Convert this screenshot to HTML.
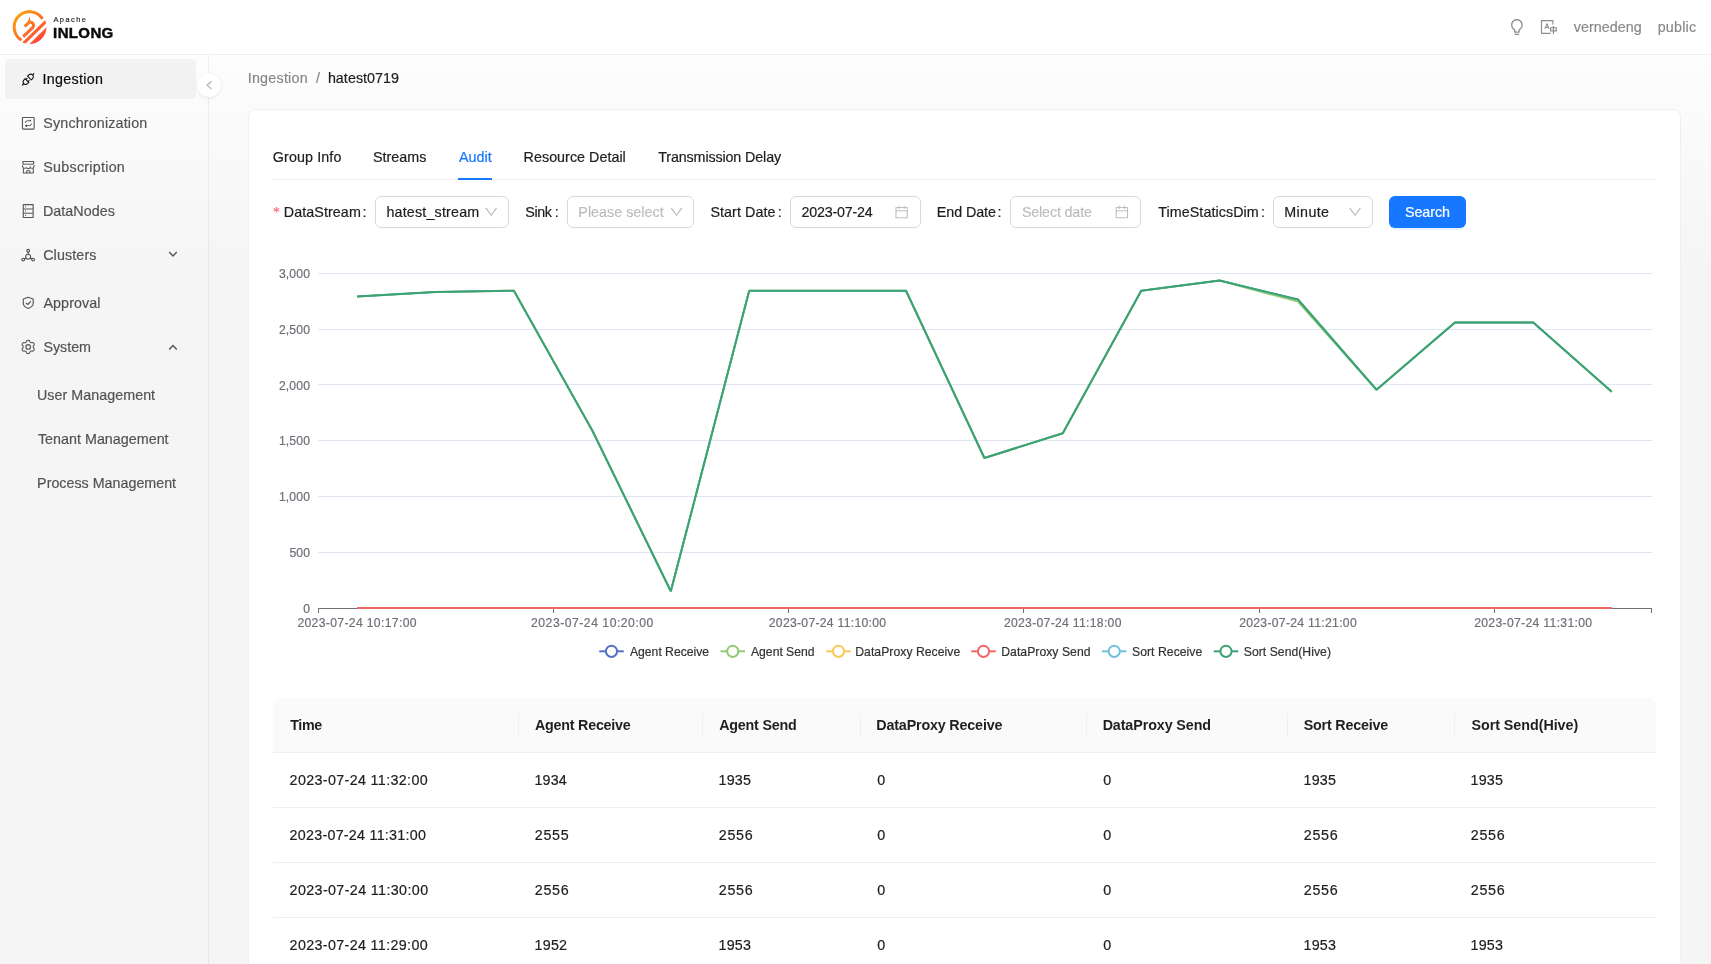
<!DOCTYPE html>
<html lang="en">
<head>
<meta charset="utf-8">
<title>Apache InLong - Ingestion - hatest0719 - Audit</title>
<style>
*{box-sizing:border-box}
html,body{margin:0;padding:0}
body{width:1711px;height:964px;overflow:hidden;position:relative;font-family:"Liberation Sans",sans-serif;
 background:linear-gradient(#ffffff,#f5f5f5 28%);-webkit-font-smoothing:antialiased}
.abs{position:absolute}
.t{position:absolute;white-space:nowrap;line-height:20px;height:20px;display:block;-webkit-text-stroke:0.2px currentColor}
#header{left:0;top:0;width:1711px;height:55px;background:#fff;border-bottom:1px solid #efefef}
#siderline{left:208px;top:55px;width:1px;height:909px;background:rgba(5,5,5,.06)}
#selitem{left:5px;top:59px;width:191px;height:40px;border-radius:4px;background:rgba(0,0,0,.04)}
#collapse{left:197px;top:73px;width:24px;height:24px;border-radius:50%;background:#fff;
 box-shadow:0 2px 8px -2px rgba(0,0,0,.05),0 1px 4px -1px rgba(25,15,15,.07),0 0 1px 0 rgba(0,0,0,.08)}
#card{left:248px;top:109px;width:1433px;height:900px;background:#fff;border:1px solid #f0f0f0;border-radius:8px}
#tabline{left:273px;top:179px;width:1383px;height:1px;background:#f0f0f0}
#inkbar{left:458px;top:178px;width:34px;height:2px;background:#1677ff}
.inp{position:absolute;top:196px;height:32px;border:1px solid #d9d9d9;border-radius:6px;background:#fff}
#btn{left:1389px;top:196px;width:77px;height:32px;border-radius:6px;background:#1677ff;box-shadow:0 2px 0 rgba(5,145,255,.1)}
#thead{left:273px;top:698px;width:1383px;height:55px;background:#fafafa;border-radius:8px 8px 0 0;border-bottom:1px solid #f0f0f0}
.rowline{position:absolute;left:273px;width:1383px;height:1px;background:#f0f0f0}
.colsep{position:absolute;top:714px;width:1px;height:22px;background:#f0f0f0}
svg.chart,svg.icons{position:absolute;left:0;top:0;pointer-events:none}
</style>
</head>
<body>
<div class="abs" id="header"></div>
<div class="abs" id="siderline"></div>
<div class="abs" id="selitem"></div>
<div class="abs" id="card"></div>
<div class="abs" id="collapse"></div>
<div class="abs" id="tabline"></div>
<div class="abs" id="inkbar"></div>
<div class="inp" style="left:375px;width:134px"></div>
<div class="inp" style="left:567px;width:127px"></div>
<div class="inp" style="left:790px;width:131px"></div>
<div class="inp" style="left:1010px;width:131px"></div>
<div class="inp" style="left:1273px;width:100px"></div>
<div class="abs" id="btn"></div>
<div class="abs" id="thead"></div>
<div class="colsep" style="left:518px"></div>
<div class="colsep" style="left:702px"></div>
<div class="colsep" style="left:860px"></div>
<div class="colsep" style="left:1086px"></div>
<div class="colsep" style="left:1287px"></div>
<div class="colsep" style="left:1454px"></div>
<div class="rowline" style="top:807px"></div>
<div class="rowline" style="top:862px"></div>
<div class="rowline" style="top:917px"></div>
<svg class="chart" width="1711" height="964" viewBox="0 0 1711 964">
<line x1="318" x2="1652" y1="273.5" y2="273.5" stroke="#E0E6F1" stroke-width="1"/>
<line x1="318" x2="1652" y1="329.5" y2="329.5" stroke="#E0E6F1" stroke-width="1"/>
<line x1="318" x2="1652" y1="384.5" y2="384.5" stroke="#E0E6F1" stroke-width="1"/>
<line x1="318" x2="1652" y1="440.5" y2="440.5" stroke="#E0E6F1" stroke-width="1"/>
<line x1="318" x2="1652" y1="496.5" y2="496.5" stroke="#E0E6F1" stroke-width="1"/>
<line x1="318" x2="1652" y1="552.5" y2="552.5" stroke="#E0E6F1" stroke-width="1"/>
<line x1="318" x2="1652" y1="608.5" y2="608.5" stroke="#6E7079" stroke-width="1"/>
<line x1="318.5" x2="318.5" y1="608" y2="613" stroke="#6E7079" stroke-width="1"/>
<line x1="553.5" x2="553.5" y1="608" y2="613" stroke="#6E7079" stroke-width="1"/>
<line x1="788.5" x2="788.5" y1="608" y2="613" stroke="#6E7079" stroke-width="1"/>
<line x1="1023.5" x2="1023.5" y1="608" y2="613" stroke="#6E7079" stroke-width="1"/>
<line x1="1259.5" x2="1259.5" y1="608" y2="613" stroke="#6E7079" stroke-width="1"/>
<line x1="1494.5" x2="1494.5" y1="608" y2="613" stroke="#6E7079" stroke-width="1"/>
<line x1="1651.5" x2="1651.5" y1="608" y2="613" stroke="#6E7079" stroke-width="1"/>
<polyline points="357.1,296.50 435.5,292.00 513.9,290.75 592.3,430.50 670.8,591.25 749.2,290.75 827.6,290.75 906.0,290.75 984.4,458.00 1062.8,433.25 1141.2,290.75 1219.6,280.50 1298.0,299.50 1376.5,389.75 1454.9,322.60 1533.3,322.60 1611.7,391.80" fill="none" stroke="#5470c6" stroke-width="1.5" stroke-linejoin="bevel"/>
<polyline points="357.1,296.50 435.5,292.00 513.9,290.75 592.3,430.50 670.8,591.25 749.2,290.75 827.6,290.75 906.0,290.75 984.4,458.00 1062.8,433.25 1141.2,290.75 1219.6,280.50 1298.0,301.60 1376.5,389.75 1454.9,322.60 1533.3,322.60 1611.7,391.80" fill="none" stroke="#91cc75" stroke-width="2" stroke-linejoin="bevel"/>
<polyline points="357.1,608.00 435.5,608.00 513.9,608.00 592.3,608.00 670.8,608.00 749.2,608.00 827.6,608.00 906.0,608.00 984.4,608.00 1062.8,608.00 1141.2,608.00 1219.6,608.00 1298.0,608.00 1376.5,608.00 1454.9,608.00 1533.3,608.00 1611.7,608.00" fill="none" stroke="#fac858" stroke-width="1.5" stroke-linejoin="bevel"/>
<polyline points="357.1,608.00 435.5,608.00 513.9,608.00 592.3,608.00 670.8,608.00 749.2,608.00 827.6,608.00 906.0,608.00 984.4,608.00 1062.8,608.00 1141.2,608.00 1219.6,608.00 1298.0,608.00 1376.5,608.00 1454.9,608.00 1533.3,608.00 1611.7,608.00" fill="none" stroke="#ee6666" stroke-width="2" stroke-linejoin="bevel"/>
<polyline points="357.1,296.50 435.5,292.00 513.9,290.75 592.3,430.50 670.8,591.25 749.2,290.75 827.6,290.75 906.0,290.75 984.4,458.00 1062.8,433.25 1141.2,290.75 1219.6,280.50 1298.0,299.50 1376.5,389.75 1454.9,322.60 1533.3,322.60 1611.7,391.80" fill="none" stroke="#73c0de" stroke-width="1.5" stroke-linejoin="bevel"/>
<polyline points="357.1,296.50 435.5,292.00 513.9,290.75 592.3,430.50 670.8,591.25 749.2,290.75 827.6,290.75 906.0,290.75 984.4,458.00 1062.8,433.25 1141.2,290.75 1219.6,280.50 1298.0,299.50 1376.5,389.75 1454.9,322.60 1533.3,322.60 1611.7,391.80" fill="none" stroke="#3ba272" stroke-width="2" stroke-linejoin="bevel"/>
<line x1="599.25" x2="623.75" y1="651.3" y2="651.3" stroke="#5470c6" stroke-width="2"/>
<circle cx="611.5" cy="651.3" r="5.6" fill="#fff" stroke="#5470c6" stroke-width="2"/>
<line x1="720.5" x2="745.0" y1="651.3" y2="651.3" stroke="#91cc75" stroke-width="2"/>
<circle cx="732.75" cy="651.3" r="5.6" fill="#fff" stroke="#91cc75" stroke-width="2"/>
<line x1="826.25" x2="850.75" y1="651.3" y2="651.3" stroke="#fac858" stroke-width="2"/>
<circle cx="838.5" cy="651.3" r="5.6" fill="#fff" stroke="#fac858" stroke-width="2"/>
<line x1="971.25" x2="995.75" y1="651.3" y2="651.3" stroke="#ee6666" stroke-width="2"/>
<circle cx="983.5" cy="651.3" r="5.6" fill="#fff" stroke="#ee6666" stroke-width="2"/>
<line x1="1102" x2="1126.5" y1="651.3" y2="651.3" stroke="#73c0de" stroke-width="2"/>
<circle cx="1114.25" cy="651.3" r="5.6" fill="#fff" stroke="#73c0de" stroke-width="2"/>
<line x1="1213.75" x2="1238.25" y1="651.3" y2="651.3" stroke="#3ba272" stroke-width="2"/>
<circle cx="1226.0" cy="651.3" r="5.6" fill="#fff" stroke="#3ba272" stroke-width="2"/>
</svg>
<svg class="icons" width="1711" height="964" viewBox="0 0 1711 964">
<defs><linearGradient id="lg" gradientUnits="userSpaceOnUse" x1="15" y1="12" x2="42" y2="43">
<stop offset="0" stop-color="#f9a80f"/><stop offset=".5" stop-color="#fb7424"/><stop offset="1" stop-color="#ff3f3d"/></linearGradient>
<clipPath id="lc"><circle cx="29.5" cy="27.1" r="17"/></clipPath></defs>
<g clip-path="url(#lc)" fill="none" stroke="url(#lg)">
<path d="M42.60 18.91A15.45 15.45 0 1 0 21.31 40.20" stroke-width="3.25"/>
<path d="M22.5 44.4L47.5 19.8" stroke-width="3.1"/>
<path d="M23.2 36.6L32.6 27.6A3.1 3.1 0 0 0 28.2 23.1L24.6 26.5" stroke-width="3"/>
</g>
<g clip-path="url(#lc)" fill="url(#lg)"><path d="M26.9 46.5L48.5 25.2L48.5 46.5Z"/><path d="M27.6 22.2L29.7 16.4L30.6 21.4Z"/></g>
<svg x="1508.9" y="19.1" width="16" height="16" viewBox="64 64 896 896"><path d="M632 888H392c-4.400 0-8 3.600-8 8v32c0 17.700 14.300 32 32 32h192c17.700 0 32-14.300 32-32v-32c0-4.400-3.600-8-8-8zM512 64c-181.100 0-328 146.900-328 328 0 121.400 66 227.400 164 284.100V792c0 17.700 14.300 32 32 32h264c17.700 0 32-14.300 32-32V676.100c98-56.700 164-162.700 164-284.100 0-181.100-146.900-328-328-328zm127.900 549.800L604 634.600V752H420V634.600l-35.900-20.800C305.400 568.300 256 484.500 256 392c0-141.400 114.600-256 256-256s256 114.600 256 256c0 92.500-49.400 176.300-128.100 221.800z" fill="rgba(0,0,0,.45)"/></svg>
<g fill="none" stroke="rgba(0,0,0,.45)" stroke-width="1.15"><path d="M1552.9 24.6V20.6H1541.5V33.4H1550.6"/><path d="M1544.9 28.9L1547 23.6L1549 28.9M1545.6 27.3H1548.4" stroke-width="1"/><path d="M1550.6 27.7H1556.3V30.9H1550.6ZM1553.45 26V34.2"/></g>
<svg x="21.2" y="72.3" width="14" height="14" viewBox="64 64 896 896"><path d="M917.7 148.8l-42.4-42.4c-1.6-1.6-3.6-2.3-5.7-2.3s-4.1.8-5.7 2.3l-76.1 76.1a199.27 199.27 0 00-112.1-34.3c-51.2 0-102.4 19.5-141.5 58.600L432.300 308.700a8.030 8.030 0 000 11.300L704 591.700c1.600 1.600 3.600 2.300 5.700 2.300 2 0 4.100-.800 5.700-2.300l101.900-101.900c68.900-69 77-175.700 24.300-253.500l76.100-76.100c3.100-3.200 3.100-8.300 0-11.400zM769.100 441.700l-59.400 59.400-186.800-186.800 59.400-59.400c24.900-24.900 58.100-38.700 93.400-38.700 35.300 0 68.400 13.700 93.400 38.700 24.900 24.900 38.700 58.100 38.700 93.400 0 35.300-13.800 68.400-38.700 93.400zm-190.200 105a8.030 8.030 0 00-11.300 0L501 613.300 410.700 523l66.700-66.700c3.100-3.100 3.100-8.200 0-11.300L441 408.600a8.030 8.030 0 00-11.300 0L363 475.300l-43-43a7.850 7.850 0 00-5.700-2.300c-2 0-4.100.8-5.700 2.300L206.800 534.200c-68.900 69-77 175.700-24.300 253.500l-76.100 76.100a8.030 8.030 0 000 11.300l42.400 42.400c1.600 1.600 3.600 2.300 5.700 2.300s4.100-.8 5.700-2.300l76.100-76.100c33.700 22.900 72.900 34.300 112.100 34.300 51.200 0 102.400-19.500 141.500-58.600l101.900-101.900c3.100-3.100 3.100-8.200 0-11.300l-43-43 66.700-66.700c3.100-3.100 3.100-8.200 0-11.300l-36.600-36.200zM441.700 769.100a131.320 131.320 0 01-93.400 38.700c-35.300 0-68.400-13.700-93.400-38.700a131.320 131.320 0 01-38.700-93.400c0-35.300 13.700-68.400 38.700-93.400l59.400-59.400 186.800 186.800-59.400 59.400z" fill="rgba(0,0,0,.95)"/></svg>
<g fill="none" stroke="rgba(0,0,0,.65)" stroke-width="1.15"><rect x="22.45" y="117.45" width="11.7" height="11.7" rx="0.8"/><g stroke-width="1"><path d="M25.3 122.89999999999999Q25.3 120.8 27.4 120.8H31M29.9 119.89999999999999L31.2 120.8"/><path d="M31.5 123.5Q31.5 125.7 29.4 125.7H25.6M26.9 124.6L25.4 125.7L26.9 126.7"/></g></g>
<g fill="none" stroke="rgba(0,0,0,.65)" stroke-width="1.05"><path d="M23 163.9V161.5H33.7V163.9"/><path d="M22.7 164.20000000000002H34" stroke-width="1.3" stroke-opacity=".75"/><path d="M22.6 164.9Q22.5 168.3 24.6 168.3Q26.3 168.3 26.5 167.3Q26.8 168.60000000000002 28.35 168.60000000000002Q29.9 168.60000000000002 30.2 167.3Q30.5 168.3 32.1 168.3Q34.2 168.3 34.1 164.9"/><path d="M23.4 168.3V173.0H33.3V168.3"/><path d="M26.7 173.0V170.70000000000002H29.9V173.0" stroke-width=".95"/></g>
<svg x="21.2" y="204.1" width="14" height="14" viewBox="64 64 896 896"><path d="M832 64H192c-17.700 0-32 14.300-32 32v832c0 17.700 14.300 32 32 32h640c17.700 0 32-14.300 32-32V96c0-17.700-14.300-32-32-32zm-600 72h560v208H232V136zm560 480H232V408h560v208zm0 272H232V680h560v208zM304 240a40 40 0 1080 0 40 40 0 10-80 0zm0 272a40 40 0 1080 0 40 40 0 10-80 0zm0 272a40 40 0 1080 0 40 40 0 10-80 0z" fill="rgba(0,0,0,.65)"/></svg>
<g fill="none" stroke="rgba(0,0,0,.65)" stroke-width="1.15"><circle cx="28.15" cy="256.7" r="2.45"/><circle cx="28.15" cy="250.7" r="1.35"/><circle cx="23.2" cy="259.6" r="1.35"/><circle cx="33.1" cy="259.6" r="1.35"/><path d="M28.15 252.1V254.2M26 257.9L24.4 258.9M30.3 257.9L31.9 258.9"/></g>
<g fill="none" stroke="rgba(0,0,0,.65)" stroke-width="1.15" stroke-linejoin="round"><path d="M28.2 297.3L33.2 299V303.6Q33.2 306.6 28.2 308.5Q23.3 306.6 23.3 303.6V299Z"/><path d="M25.9 302.8L27.7 304.5L30.8 301.3"/></g>
<path d="M29.44 340.52Q28.20 339.90 26.96 340.52L26.25 342.08Q25.85 342.83 25.00 342.80L23.29 342.64Q22.14 343.40 22.05 344.78L23.05 346.18Q23.50 346.90 23.05 347.62L22.05 349.02Q22.14 350.40 23.29 351.16L25.00 351.00Q25.85 350.97 26.25 351.72L26.96 353.28Q28.20 353.90 29.44 353.28L30.15 351.72Q30.55 350.97 31.40 351.00L33.11 351.16Q34.26 350.40 34.35 349.02L33.35 347.62Q32.90 346.90 33.35 346.18L34.35 344.78Q34.26 343.40 33.11 342.64L31.40 342.80Q30.55 342.83 30.15 342.08Z" fill="none" stroke="rgba(0,0,0,.65)" stroke-width="1.1" stroke-linejoin="round"/><circle cx="28.2" cy="346.9" r="2.3" fill="none" stroke="rgba(0,0,0,.65)" stroke-width="1.1"/>
<g fill="none" stroke="rgba(0,0,0,.65)" stroke-width="1.5"><path d="M169.2 252L173 255.9L176.8 252"/><path d="M169.2 349.5L173 345.6L176.8 349.5"/></g>
<path d="M211.6 81.3L207.1 85.2L211.6 89.1" fill="none" stroke="rgba(0,0,0,.3)" stroke-width="1.2"/>
<svg x="484.25" y="205" width="14" height="14" viewBox="64 64 896 896"><path d="M884 256h-75c-5.100 0-9.900 2.500-12.900 6.600L512 654.200 227.900 262.600c-3-4.100-7.800-6.600-12.900-6.600h-75c-6.500 0-10.300 7.400-6.500 12.700l352.600 486.100c12.800 17.600 39 17.600 51.700 0l352.600-486.100c3.900-5.300.1-12.700-6.400-12.700z" fill="rgba(0,0,0,.25)"/></svg>
<svg x="669.5" y="205" width="14" height="14" viewBox="64 64 896 896"><path d="M884 256h-75c-5.100 0-9.900 2.500-12.900 6.600L512 654.200 227.900 262.600c-3-4.100-7.800-6.600-12.900-6.600h-75c-6.500 0-10.300 7.400-6.500 12.700l352.600 486.100c12.800 17.600 39 17.600 51.700 0l352.600-486.100c3.900-5.300.1-12.700-6.400-12.700z" fill="rgba(0,0,0,.25)"/></svg>
<svg x="1348" y="205" width="14" height="14" viewBox="64 64 896 896"><path d="M884 256h-75c-5.100 0-9.900 2.500-12.900 6.600L512 654.200 227.900 262.600c-3-4.100-7.800-6.600-12.900-6.600h-75c-6.500 0-10.300 7.400-6.500 12.700l352.600 486.100c12.800 17.600 39 17.600 51.700 0l352.600-486.100c3.900-5.300.1-12.700-6.400-12.700z" fill="rgba(0,0,0,.25)"/></svg>
<svg x="894.65" y="205.1" width="14" height="14" viewBox="64 64 896 896"><path d="M880 184H712v-64c0-4.400-3.600-8-8-8h-56c-4.400 0-8 3.600-8 8v64H384v-64c0-4.400-3.600-8-8-8h-56c-4.400 0-8 3.600-8 8v64H144c-17.700 0-32 14.300-32 32v664c0 17.700 14.300 32 32 32h736c17.700 0 32-14.300 32-32V216c0-17.700-14.300-32-32-32zm-40 656H184V460h656v380zM184 392V256h128v48c0 4.400 3.600 8 8 8h56c4.400 0 8-3.600 8-8v-48h256v48c0 4.400 3.600 8 8 8h56c4.400 0 8-3.600 8-8v-48h128v136H184z" fill="rgba(0,0,0,.25)"/></svg>
<svg x="1114.85" y="205.1" width="14" height="14" viewBox="64 64 896 896"><path d="M880 184H712v-64c0-4.400-3.600-8-8-8h-56c-4.400 0-8 3.600-8 8v64H384v-64c0-4.400-3.600-8-8-8h-56c-4.400 0-8 3.600-8 8v64H144c-17.700 0-32 14.300-32 32v664c0 17.700 14.300 32 32 32h736c17.700 0 32-14.300 32-32V216c0-17.700-14.300-32-32-32zm-40 656H184V460h656v380zM184 392V256h128v48c0 4.400 3.600 8 8 8h56c4.400 0 8-3.600 8-8v-48h256v48c0 4.400 3.600 8 8 8h56c4.400 0 8-3.600 8-8v-48h128v136H184z" fill="rgba(0,0,0,.25)"/></svg>
</svg>
<span class="t" style="left:273px;top:202.6px;font-size:14px;color:#ff4d4f;-webkit-text-stroke-width:0;font-family:'Liberation Serif',serif">*</span>
<div id="txt" style="position:absolute;left:0;top:0;width:1711px;height:964px;will-change:transform">
<span class="t" style="left:53.40px;top:9.54px;font-size:7.4px;color:#2b2b2b;letter-spacing:1.494px">Apache</span>
<span class="t" style="left:53.10px;top:23.20px;font-size:15.0px;color:#0a0a0a;letter-spacing:0.367px;-webkit-text-stroke-width:0.45px;font-weight:700">INLONG</span>
<span class="t" style="left:1573.75px;top:17.05px;font-size:14.3px;color:rgba(0,0,0,.45);letter-spacing:0.046px">vernedeng</span>
<span class="t" style="left:1657.64px;top:17.05px;font-size:14.3px;color:rgba(0,0,0,.45);letter-spacing:0.236px">public</span>
<span class="t" style="left:42.61px;top:69.05px;font-size:14.3px;color:rgba(0,0,0,.95);letter-spacing:0.288px">Ingestion</span>
<span class="t" style="left:43.33px;top:113.05px;font-size:14.3px;color:rgba(0,0,0,.65);letter-spacing:0.152px">Synchronization</span>
<span class="t" style="left:43.33px;top:157.05px;font-size:14.3px;color:rgba(0,0,0,.65);letter-spacing:0.253px">Subscription</span>
<span class="t" style="left:42.96px;top:201.05px;font-size:14.3px;color:rgba(0,0,0,.65);letter-spacing:0.054px">DataNodes</span>
<span class="t" style="left:43.18px;top:245.05px;font-size:14.3px;color:rgba(0,0,0,.65);letter-spacing:0.114px">Clusters</span>
<span class="t" style="left:43.50px;top:293.05px;font-size:14.3px;color:rgba(0,0,0,.65);letter-spacing:0.064px">Approval</span>
<span class="t" style="left:43.43px;top:337.05px;font-size:14.3px;color:rgba(0,0,0,.65);letter-spacing:-0.011px">System</span>
<span class="t" style="left:37.00px;top:385.05px;font-size:14.3px;color:rgba(0,0,0,.65);letter-spacing:0.035px">User Management</span>
<span class="t" style="left:37.96px;top:429.05px;font-size:14.3px;color:rgba(0,0,0,.65);letter-spacing:0.017px">Tenant Management</span>
<span class="t" style="left:37.11px;top:473.05px;font-size:14.3px;color:rgba(0,0,0,.65);letter-spacing:-0.005px">Process Management</span>
<span class="t" style="left:247.71px;top:68.15px;font-size:14.3px;color:rgba(0,0,0,.45);letter-spacing:0.244px">Ingestion</span>
<span class="t" style="left:315.90px;top:68.15px;font-size:14.3px;color:rgba(0,0,0,.45);letter-spacing:0.000px">/</span>
<span class="t" style="left:327.89px;top:68.15px;font-size:14.3px;color:rgba(0,0,0,.88);letter-spacing:0.045px">hatest0719</span>
<span class="t" style="left:272.79px;top:147.25px;font-size:14.3px;color:rgba(0,0,0,.88);letter-spacing:0.118px">Group Info</span>
<span class="t" style="left:372.93px;top:147.25px;font-size:14.3px;color:rgba(0,0,0,.88);letter-spacing:0.027px">Streams</span>
<span class="t" style="left:459.00px;top:147.25px;font-size:14.3px;color:#1677ff;letter-spacing:0.006px">Audit</span>
<span class="t" style="left:523.61px;top:147.25px;font-size:14.3px;color:rgba(0,0,0,.88);letter-spacing:0.032px">Resource Detail</span>
<span class="t" style="left:658.21px;top:147.25px;font-size:14.3px;color:rgba(0,0,0,.88);letter-spacing:-0.123px">Transmission Delay</span>
<span class="t" style="left:283.86px;top:202.05px;font-size:14.3px;color:rgba(0,0,0,.88);letter-spacing:0.072px">DataStream</span>
<span class="t" style="left:362.41px;top:202.05px;font-size:14.3px;color:rgba(0,0,0,.88);letter-spacing:0.000px">:</span>
<span class="t" style="left:386.39px;top:202.05px;font-size:14.3px;color:rgba(0,0,0,.88);letter-spacing:0.192px">hatest_stream</span>
<span class="t" style="left:525.33px;top:202.05px;font-size:14.3px;color:rgba(0,0,0,.88);letter-spacing:-0.396px">Sink</span>
<span class="t" style="left:554.81px;top:202.05px;font-size:14.3px;color:rgba(0,0,0,.88);letter-spacing:0.000px">:</span>
<span class="t" style="left:578.36px;top:202.05px;font-size:14.3px;color:rgba(0,0,0,.25);letter-spacing:0.018px">Please select</span>
<span class="t" style="left:710.43px;top:202.05px;font-size:14.3px;color:rgba(0,0,0,.88);letter-spacing:0.068px">Start Date</span>
<span class="t" style="left:777.81px;top:202.05px;font-size:14.3px;color:rgba(0,0,0,.88);letter-spacing:0.000px">:</span>
<span class="t" style="left:801.53px;top:202.05px;font-size:14.3px;color:rgba(0,0,0,.88);letter-spacing:-0.212px">2023-07-24</span>
<span class="t" style="left:936.86px;top:202.05px;font-size:14.3px;color:rgba(0,0,0,.88);letter-spacing:-0.080px">End Date</span>
<span class="t" style="left:997.61px;top:202.05px;font-size:14.3px;color:rgba(0,0,0,.88);letter-spacing:0.000px">:</span>
<span class="t" style="left:1021.93px;top:202.05px;font-size:14.3px;color:rgba(0,0,0,.25);letter-spacing:-0.156px">Select date</span>
<span class="t" style="left:1158.21px;top:202.05px;font-size:14.3px;color:rgba(0,0,0,.88);letter-spacing:0.078px">TimeStaticsDim</span>
<span class="t" style="left:1260.91px;top:202.05px;font-size:14.3px;color:rgba(0,0,0,.88);letter-spacing:0.000px">:</span>
<span class="t" style="left:1284.36px;top:202.05px;font-size:14.3px;color:rgba(0,0,0,.88);letter-spacing:0.328px">Minute</span>
<span class="t" style="left:1404.93px;top:202.05px;font-size:14.3px;color:#fff;letter-spacing:-0.057px">Search</span>
<span class="t" style="left:290.16px;top:715.45px;font-size:14.3px;color:rgba(0,0,0,.88);letter-spacing:-0.334px;-webkit-text-stroke-width:0;font-weight:700">Time</span>
<span class="t" style="left:535.01px;top:715.45px;font-size:14.3px;color:rgba(0,0,0,.88);letter-spacing:-0.232px;-webkit-text-stroke-width:0;font-weight:700">Agent Receive</span>
<span class="t" style="left:719.21px;top:715.45px;font-size:14.3px;color:rgba(0,0,0,.88);letter-spacing:-0.210px;-webkit-text-stroke-width:0;font-weight:700">Agent Send</span>
<span class="t" style="left:876.34px;top:715.45px;font-size:14.3px;color:rgba(0,0,0,.88);letter-spacing:-0.165px;-webkit-text-stroke-width:0;font-weight:700">DataProxy Receive</span>
<span class="t" style="left:1102.64px;top:715.45px;font-size:14.3px;color:rgba(0,0,0,.88);letter-spacing:-0.096px;-webkit-text-stroke-width:0;font-weight:700">DataProxy Send</span>
<span class="t" style="left:1303.71px;top:715.45px;font-size:14.3px;color:rgba(0,0,0,.88);letter-spacing:-0.189px;-webkit-text-stroke-width:0;font-weight:700">Sort Receive</span>
<span class="t" style="left:1471.51px;top:715.45px;font-size:14.3px;color:rgba(0,0,0,.88);letter-spacing:-0.040px;-webkit-text-stroke-width:0;font-weight:700">Sort Send(Hive)</span>
<span class="t" style="left:289.59px;top:770.45px;font-size:14.3px;color:rgba(0,0,0,.88);letter-spacing:0.356px">2023-07-24 11:32:00</span>
<span class="t" style="left:534.50px;top:770.45px;font-size:14.3px;color:rgba(0,0,0,.88);letter-spacing:0.154px">1934</span>
<span class="t" style="left:718.50px;top:770.45px;font-size:14.3px;color:rgba(0,0,0,.88);letter-spacing:0.202px">1935</span>
<span class="t" style="left:877.37px;top:770.45px;font-size:14.3px;color:rgba(0,0,0,.88);letter-spacing:0.000px">0</span>
<span class="t" style="left:1103.37px;top:770.45px;font-size:14.3px;color:rgba(0,0,0,.88);letter-spacing:0.000px">0</span>
<span class="t" style="left:1303.50px;top:770.45px;font-size:14.3px;color:rgba(0,0,0,.88);letter-spacing:0.202px">1935</span>
<span class="t" style="left:1470.50px;top:770.45px;font-size:14.3px;color:rgba(0,0,0,.88);letter-spacing:0.202px">1935</span>
<span class="t" style="left:289.59px;top:825.45px;font-size:14.3px;color:rgba(0,0,0,.88);letter-spacing:0.256px">2023-07-24 11:31:00</span>
<span class="t" style="left:534.78px;top:825.45px;font-size:14.3px;color:rgba(0,0,0,.88);letter-spacing:0.673px">2555</span>
<span class="t" style="left:718.78px;top:825.45px;font-size:14.3px;color:rgba(0,0,0,.88);letter-spacing:0.673px">2556</span>
<span class="t" style="left:877.37px;top:825.45px;font-size:14.3px;color:rgba(0,0,0,.88);letter-spacing:0.000px">0</span>
<span class="t" style="left:1103.37px;top:825.45px;font-size:14.3px;color:rgba(0,0,0,.88);letter-spacing:0.000px">0</span>
<span class="t" style="left:1303.79px;top:825.45px;font-size:14.3px;color:rgba(0,0,0,.88);letter-spacing:0.673px">2556</span>
<span class="t" style="left:1470.79px;top:825.45px;font-size:14.3px;color:rgba(0,0,0,.88);letter-spacing:0.673px">2556</span>
<span class="t" style="left:289.59px;top:880.45px;font-size:14.3px;color:rgba(0,0,0,.88);letter-spacing:0.378px">2023-07-24 11:30:00</span>
<span class="t" style="left:534.78px;top:880.45px;font-size:14.3px;color:rgba(0,0,0,.88);letter-spacing:0.673px">2556</span>
<span class="t" style="left:718.78px;top:880.45px;font-size:14.3px;color:rgba(0,0,0,.88);letter-spacing:0.673px">2556</span>
<span class="t" style="left:877.37px;top:880.45px;font-size:14.3px;color:rgba(0,0,0,.88);letter-spacing:0.000px">0</span>
<span class="t" style="left:1103.37px;top:880.45px;font-size:14.3px;color:rgba(0,0,0,.88);letter-spacing:0.000px">0</span>
<span class="t" style="left:1303.79px;top:880.45px;font-size:14.3px;color:rgba(0,0,0,.88);letter-spacing:0.673px">2556</span>
<span class="t" style="left:1470.79px;top:880.45px;font-size:14.3px;color:rgba(0,0,0,.88);letter-spacing:0.673px">2556</span>
<span class="t" style="left:289.59px;top:935.45px;font-size:14.3px;color:rgba(0,0,0,.88);letter-spacing:0.356px">2023-07-24 11:29:00</span>
<span class="t" style="left:534.50px;top:935.45px;font-size:14.3px;color:rgba(0,0,0,.88);letter-spacing:0.250px">1952</span>
<span class="t" style="left:718.50px;top:935.45px;font-size:14.3px;color:rgba(0,0,0,.88);letter-spacing:0.202px">1953</span>
<span class="t" style="left:877.37px;top:935.45px;font-size:14.3px;color:rgba(0,0,0,.88);letter-spacing:0.000px">0</span>
<span class="t" style="left:1103.37px;top:935.45px;font-size:14.3px;color:rgba(0,0,0,.88);letter-spacing:0.000px">0</span>
<span class="t" style="left:1303.50px;top:935.45px;font-size:14.3px;color:rgba(0,0,0,.88);letter-spacing:0.202px">1953</span>
<span class="t" style="left:1470.50px;top:935.45px;font-size:14.3px;color:rgba(0,0,0,.88);letter-spacing:0.202px">1953</span>
<span class="t" style="left:278.91px;top:263.87px;font-size:12.2px;color:#6E7079;letter-spacing:0.150px">3,000</span>
<span class="t" style="left:278.91px;top:319.67px;font-size:12.2px;color:#6E7079;letter-spacing:0.150px">2,500</span>
<span class="t" style="left:278.91px;top:375.57px;font-size:12.2px;color:#6E7079;letter-spacing:0.150px">2,000</span>
<span class="t" style="left:278.91px;top:431.37px;font-size:12.2px;color:#6E7079;letter-spacing:0.150px">1,500</span>
<span class="t" style="left:278.91px;top:487.17px;font-size:12.2px;color:#6E7079;letter-spacing:0.150px">1,000</span>
<span class="t" style="left:289.39px;top:543.07px;font-size:12.2px;color:#6E7079;letter-spacing:0.150px">500</span>
<span class="t" style="left:303.26px;top:598.87px;font-size:12.2px;color:#6E7079;letter-spacing:0.150px">0</span>
<span class="t" style="left:297.40px;top:612.77px;font-size:12.2px;color:#6E7079;letter-spacing:0.331px">2023-07-24 10:17:00</span>
<span class="t" style="left:531.03px;top:612.77px;font-size:12.2px;color:#6E7079;letter-spacing:0.509px">2023-07-24 10:20:00</span>
<span class="t" style="left:768.77px;top:612.77px;font-size:12.2px;color:#6E7079;letter-spacing:0.282px">2023-07-24 11:10:00</span>
<span class="t" style="left:1003.90px;top:612.77px;font-size:12.2px;color:#6E7079;letter-spacing:0.293px">2023-07-24 11:18:00</span>
<span class="t" style="left:1239.14px;top:612.77px;font-size:12.2px;color:#6E7079;letter-spacing:0.293px">2023-07-24 11:21:00</span>
<span class="t" style="left:1474.17px;top:612.77px;font-size:12.2px;color:#6E7079;letter-spacing:0.315px">2023-07-24 11:31:00</span>
<span class="t" style="left:630.00px;top:641.77px;font-size:12.2px;color:#333;letter-spacing:-0.021px">Agent Receive</span>
<span class="t" style="left:751.00px;top:641.77px;font-size:12.2px;color:#333;letter-spacing:-0.020px">Agent Send</span>
<span class="t" style="left:855.27px;top:641.77px;font-size:12.2px;color:#333;letter-spacing:0.040px">DataProxy Receive</span>
<span class="t" style="left:1001.27px;top:641.77px;font-size:12.2px;color:#333;letter-spacing:0.036px">DataProxy Send</span>
<span class="t" style="left:1132.01px;top:641.77px;font-size:12.2px;color:#333;letter-spacing:0.044px">Sort Receive</span>
<span class="t" style="left:1243.76px;top:641.77px;font-size:12.2px;color:#333;letter-spacing:0.035px">Sort Send(Hive)</span>
</div>
</body>
</html>
